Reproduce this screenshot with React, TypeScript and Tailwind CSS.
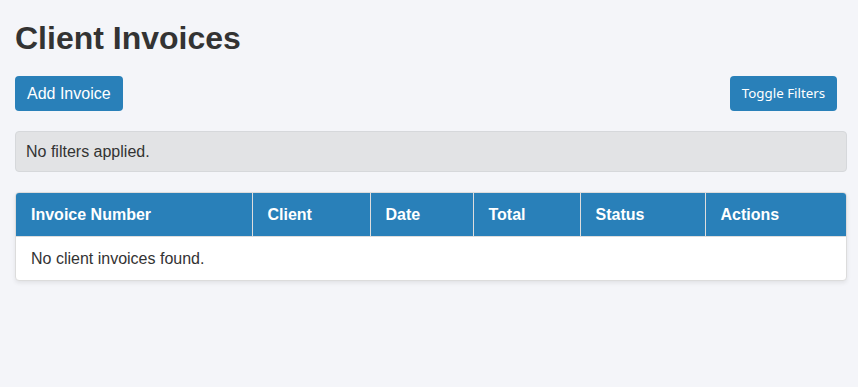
const columns = [
  { label: 'Invoice Number', width: 'w-[236px]' },
  { label: 'Client', width: 'w-[118px]' },
  { label: 'Date', width: 'w-[103px]' },
  { label: 'Total', width: 'w-[107px]' },
  { label: 'Status', width: 'w-[125px]' },
  { label: 'Actions', width: 'w-[143px]' },
];

export default function App() {
  return (
    <div className="min-h-screen bg-[#f4f5f9] pl-[15px] pr-[11px] pt-[20px] font-['Liberation_Sans',Arial,sans-serif] text-[#333]">
      <h1 className="text-[32px] font-bold leading-[37px] mb-[19px]">Client Invoices</h1>

      {/* Actions bar */}
      <div className="flex items-center justify-between mb-[20px]">
        <button className="h-[35px] px-[12px] rounded-[4px] bg-[#2980b9] text-white text-[16px]">
          Add Invoice
        </button>
        <button className="h-[35px] w-[107px] mr-[10px] rounded-[4px] bg-[#2980b9] text-white text-[13.33px] font-['Noto_Sans',sans-serif]">
          Toggle Filters
        </button>
      </div>

      {/* Filters summary */}
      <div className="border border-[#d6d8db] bg-[#e2e3e5] rounded-[4px] px-[10px] py-[10px] text-[16px] leading-[19px] mb-[20px]">
        No filters applied.
      </div>

      {/* Invoices table */}
      <div className="rounded-[4px] overflow-hidden border border-[#dcdcdc] bg-white shadow-[0_2px_4px_rgba(0,0,0,0.08)]">
        <table className="w-full border-collapse table-fixed text-[16px] leading-[19px]">
          <thead>
            <tr className="bg-[#2980b9] text-white">
              {columns.map((col, i) => (
                <th
                  key={col.label}
                  className={`${col.width} text-left font-bold px-[15px] py-[12px] ${i > 0 ? 'border-l border-[#dddddd]' : ''}`}
                >
                  {col.label}
                </th>
              ))}
            </tr>
          </thead>
          <tbody>
            <tr className="border-t border-[#dddddd]">
              <td colSpan={6} className="px-[15px] py-[12px]">
                No client invoices found.
              </td>
            </tr>
          </tbody>
        </table>
      </div>
    </div>
  );
}
